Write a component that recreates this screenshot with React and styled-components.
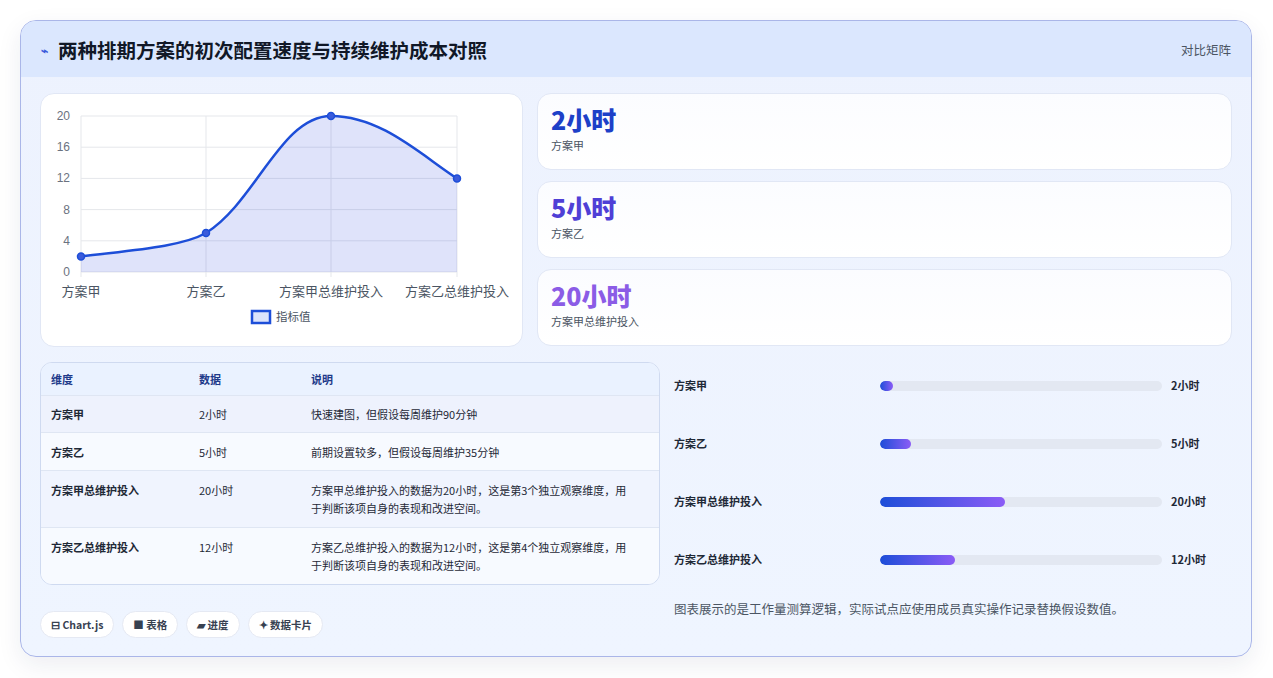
import React from "react";
import styled, { createGlobalStyle } from "styled-components";

const Global = createGlobalStyle`
  html,body{margin:0;padding:0;background:#fff;}
  body{font-family:"Noto Sans CJK SC","Noto Sans",sans-serif;}
  *{box-sizing:border-box;}
`;
const Page = styled.div`padding:20px 21px 21px 20px;width:1273px;height:678px;`;
const Card = styled.div`
  border:1px solid #aab6e8;border-radius:16px;overflow:hidden;height:637px;
  background:linear-gradient(180deg,#edf2fe,#eff5ff);
  box-shadow:0 8px 24px rgba(30,40,90,0.08);
`;
const Header = styled.div`
  height:56px;background:#dbe7fe;display:flex;align-items:center;justify-content:space-between;
  padding:0 20px 0 20px;
`;
const Title = styled.h1`margin:0;font-size:19.5px;font-weight:700;color:#111827;display:flex;align-items:center;gap:10px;`;
const Bolt = styled.span`color:#3b5bdb;font-size:12px;`;
const HeadRight = styled.span`font-size:12.5px;color:#4b5563;`;
const Body = styled.div`padding:16px 19px 0 19px;display:flex;flex-direction:column;gap:15px;`;
const Row = styled.div`display:grid;grid-template-columns:${p=>p.$cols};gap:14px;`;
const Panel = styled.div`background:#fff;border:1px solid #e1e7f5;border-radius:14px;`;
const ChartPanel = styled(Panel)`height:254px;position:relative;`;
const Stats = styled.div`display:flex;flex-direction:column;gap:11px;`;
const Stat = styled(Panel)`height:77px;padding:9px 13px;background:linear-gradient(180deg,#fbfcff,#fff);`;
const StatVal = styled.div`font-size:25px;font-weight:800;color:${p=>p.$c};line-height:32px;`;
const StatLab = styled.div`font-size:11px;color:#4b5563;margin-top:2px;`;
const Table = styled.div`border:1px solid #cfdaf0;border-radius:12px;overflow:hidden;background:#f7faff;`;
const TR = styled.div`display:grid;grid-template-columns:148px 112px 1fr;padding:0 10px;
  min-height:${p=>p.$h}px;align-items:${p=>p.$tall?"start":"center"};padding-top:${p=>p.$tall?"10px":"0"};
  background:${p=>p.$bg};border-top:${p=>p.$first?"none":"1px solid #dfe6f3"};
  font-size:11px;color:${p=>p.$head?"#1e3a8a":"#1f2937"};font-weight:${p=>p.$head?600:400};line-height:18px;`;
const Cell = styled.div`font-weight:${p=>p.$b?600:"inherit"};padding-right:${p=>p.$pr||0}px;`;
const Bars = styled.div`display:flex;flex-direction:column;padding-top:15px;`;
const BarRow = styled.div`display:grid;grid-template-columns:206px 282px 1fr;gap:0;height:58px;align-items:start;font-size:11px;font-weight:600;color:#1f2937;`;
const Track = styled.div`height:10px;background:#e3e8f2;border-radius:5px;margin-top:4px;overflow:hidden;`;
const Fill = styled.div`height:100%;border-radius:5px;background:linear-gradient(90deg,#1d4ed8,#8b5cf6);`;
const BarVal = styled.span`padding-left:9px;`;
const Note = styled.div`font-size:12.5px;color:#4b5563;margin-top:-10px;`;
const Tags = styled.div`display:flex;gap:8px;margin-top:26px;`;
const Tag = styled.span`height:27px;padding:0 10px;border-radius:14px;background:#fff;border:1px solid #e5e9f3;
  font-size:10.5px;font-weight:600;color:#374151;display:flex;align-items:center;gap:3px;`;

const xs=[40,165,290,416], vals=[2,5,20,12];
const y=v=>178-v*7.8;
function Chart(){
  const pts=vals.map((v,i)=>[xs[i],y(v)]);
  const d=`M40,${y(2)} C90,${y(2.8)} 140,${y(3.2)} 165,${y(5)} C215,${y(9)} 240,${y(20)} 290,${y(20)} C340,${y(20)} 380,${y(15)} 416,${y(12)}`;
  const grid=[0,4,8,12,16,20];
  return(
    <svg width="483" height="254" viewBox="0 0 483 254" style={{display:"block"}}>
      {grid.map(g=><g key={g}><line x1="40" x2="416" y1={y(g)} y2={y(g)} stroke="#e5e7eb"/>
        <text x="29" y={y(g)+4} fontSize="12" fill="#6b7280" textAnchor="end" fontFamily="Liberation Sans">{g}</text></g>)}
      {xs.map(x=><line key={x} x1={x} x2={x} y1={y(20)} y2={y(0)+5} stroke="#e5e7eb"/>)}
      <path d={d+` L416,${y(0)} L40,${y(0)} Z`} fill="rgba(37,70,220,0.15)"/>
      <path d={d} fill="none" stroke="#1d4ed8" strokeWidth="2.5"/>
      {pts.map(([a,b],i)=><circle key={i} cx={a} cy={b} r="3.5" fill="#3b5bdb" stroke="#1d4ed8" strokeWidth="1.5"/>)}
      {["方案甲","方案乙","方案甲总维护投入","方案乙总维护投入"].map((t,i)=>
        <text key={t} x={xs[i]} y="202" fontSize="13" fill="#4b5563" textAnchor="middle">{t}</text>)}
      <rect x="211" y="217" width="18" height="12" fill="#dbe3fb" stroke="#1d4ed8" strokeWidth="2.5"/>
      <text x="235" y="227" fontSize="11.5" fill="#4b5563">指标值</text>
    </svg>);
}

const rows=[
  ["方案甲","2小时","快速建图，但假设每周维护90分钟","#eef2fd",37],
  ["方案乙","5小时","前期设置较多，但假设每周维护35分钟","#f7faff",38],
  ["方案甲总维护投入","20小时","方案甲总维护投入的数据为20小时，这是第3个独立观察维度，用于判断该项自身的表现和改进空间。","#f0f4fe",57],
  ["方案乙总维护投入","12小时","方案乙总维护投入的数据为12小时，这是第4个独立观察维度，用于判断该项自身的表现和改进空间。","#f7faff",57],
];

export default function App(){
  return(<Page><Global/><Card>
    <Header><Title><Bolt>⌁</Bolt>两种排期方案的初次配置速度与持续维护成本对照</Title><HeadRight>对比矩阵</HeadRight></Header>
    <Body>
      <Row $cols="483px 1fr">
        <ChartPanel><Chart/></ChartPanel>
        <Stats>
          <Stat><StatVal $c="#1d40c8">2小时</StatVal><StatLab>方案甲</StatLab></Stat>
          <Stat><StatVal $c="#4f3fd6">5小时</StatVal><StatLab>方案乙</StatLab></Stat>
          <Stat><StatVal $c="#8b5ce6">20小时</StatVal><StatLab>方案甲总维护投入</StatLab></Stat>
        </Stats>
      </Row>
      <Row $cols="620px 1fr">
        <div>
          <Table>
            <TR $head $first $h={32} $bg="#eaf2ff"><Cell>维度</Cell><Cell>数据</Cell><Cell>说明</Cell></TR>
            {rows.map(r=><TR key={r[0]} $h={r[4]} $bg={r[3]} $tall={r[4]>40}>
              <Cell $b>{r[0]}</Cell><Cell>{r[1]}</Cell><Cell $pr={22}>{r[2]}</Cell></TR>)}
          </Table>
          <Tags><Tag>⊟ Chart.js</Tag><Tag>■ 表格</Tag><Tag>▰ 进度</Tag><Tag>✦ 数据卡片</Tag></Tags>
        </div>
        <div>
          <Bars>
            {rows.map((r,i)=><BarRow key={r[0]}><span>{r[0]}</span>
              <Track><Fill style={{width:`${Math.max(vals[i]/45*100,4)}%`}}/></Track><BarVal>{r[1]}</BarVal></BarRow>)}
          </Bars>
          <Note>图表展示的是工作量测算逻辑，实际试点应使用成员真实操作记录替换假设数值。</Note>
        </div>
      </Row>
    </Body>
  </Card></Page>);
}
